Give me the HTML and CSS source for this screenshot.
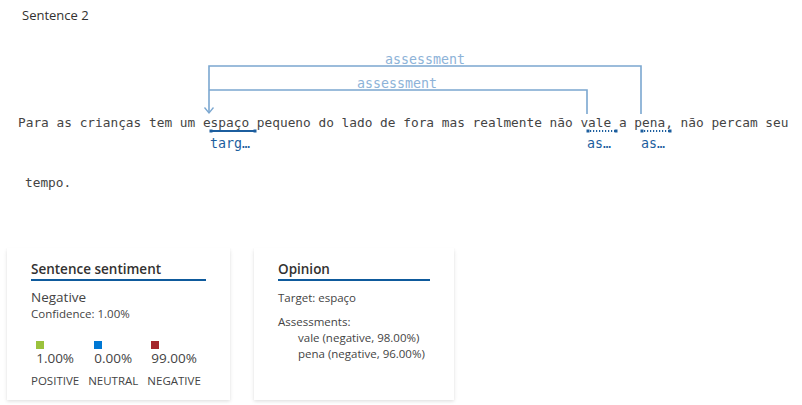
FILE: index.html
```
<!DOCTYPE html>
<html>
<head>
<meta charset="utf-8">
<link rel="stylesheet" href="styles.css">
</head>
<body>
<div class="title">Sentence 2</div>
<div class="viz">
  <svg class="arcs" width="802" height="130" viewBox="0 40 802 130" xmlns="http://www.w3.org/2000/svg">
    <g class="arc" fill="none" stroke="#7ba7d0" stroke-width="1.6">
      <polyline points="209,113 209,66 641,66 641,114"/>
      <polyline points="209,90 587,90 587,114"/>
      <polyline points="204.5,107.5 209,113 213.5,107.5" stroke-width="1.3"/>
    </g>
    <text class="arc-label" x="385" y="64">assessment</text>
    <text class="arc-label" x="357" y="88">assessment</text>
    <g fill="#1c5e9e" stroke="#1c5e9e">
      <line x1="211" y1="131" x2="255" y2="131" stroke-width="2"/>
      <rect x="209.5" y="129.5" width="3" height="3" stroke="none"/>
      <rect x="253.5" y="129.5" width="3" height="3" stroke="none"/>
      <line x1="590" y1="131" x2="615" y2="131" stroke-width="2" stroke-dasharray="1.2 1.8"/>
      <rect x="586.5" y="129.5" width="3" height="3" stroke="none"/>
      <rect x="614.5" y="129.5" width="3" height="3" stroke="none"/>
      <line x1="644" y1="131" x2="669" y2="131" stroke-width="2" stroke-dasharray="1.2 1.8"/>
      <rect x="640.5" y="129.5" width="3" height="3" stroke="none"/>
      <rect x="668.5" y="129.5" width="3" height="3" stroke="none"/>
    </g>
    <text class="tok-label" x="210" y="148">targ…</text>
    <text class="tok-label" x="587" y="148">as…</text>
    <text class="tok-label" x="641" y="148">as…</text>
  </svg>
  <div class="line first">Para as crianças tem um espaço pequeno do lado de fora mas realmente não vale a pena, não percam seu</div>
  <div class="line second">tempo.</div>
</div>
<div class="cards">
  <div class="card card-sent">
    <div class="card-title">Sentence sentiment</div>
    <div class="label-big">Negative</div>
    <div class="small">Confidence: 1.00%</div>
    <div class="scores">
      <div class="score">
        <div class="score-inner">
          <span class="sq pos"></span>
          <div class="pct">1.00%</div>
        </div>
        <div class="cap">POSITIVE</div>
      </div>
      <div class="score">
        <div class="score-inner">
          <span class="sq neu"></span>
          <div class="pct">0.00%</div>
        </div>
        <div class="cap">NEUTRAL</div>
      </div>
      <div class="score">
        <div class="score-inner">
          <span class="sq neg"></span>
          <div class="pct">99.00%</div>
        </div>
        <div class="cap">NEGATIVE</div>
      </div>
    </div>
  </div>
  <div class="card card-op">
    <div class="card-title">Opinion</div>
    <div class="small target">Target: espaço</div>
    <div class="small ass-head">Assessments:</div>
    <div class="small ass">vale (negative, 98.00%)</div>
    <div class="small ass">pena (negative, 96.00%)</div>
  </div>
</div>
</body>
</html>
```
FILE: styles.css
```
html, body {
  margin: 0;
  padding: 0;
  background: #ffffff;
}
body {
  width: 802px;
  height: 405px;
  overflow: hidden;
  font-family: "Open Sans", "Noto Sans", sans-serif;
  color: #444444;
}
.title {
  padding: 6px 0 0 22px;
  height: 40px;
  box-sizing: border-box;
  font-size: 13px;
  line-height: 18px;
  color: #323130;
}
.viz {
  position: relative;
  height: 170px;
  padding-top: 74px;
  box-sizing: border-box;
}
.arcs {
  position: absolute;
  left: 0;
  top: 0;
}
.arc-label {
  font-family: "DejaVu Sans Mono", monospace;
  font-size: 13.3px;
  fill: #8db3d8;
}
.tok-label {
  font-family: "DejaVu Sans Mono", monospace;
  font-size: 13.3px;
  fill: #1c5e9e;
}
.line {
  font-family: "DejaVu Sans Mono", monospace;
  font-size: 12.8px;
  line-height: 18px;
  white-space: nowrap;
  color: #444444;
}
.first {
  padding-left: 18px;
}
.second {
  padding-left: 25px;
  margin-top: 42px;
}
.cards {
  display: flex;
  gap: 24px;
  padding-left: 7px;
  margin-top: 38px;
}
.card {
  background: #fff;
  height: 152px;
  box-sizing: border-box;
  padding: 11px 24px 0 24px;
  box-shadow: 0 1.6px 3.6px rgba(0,0,0,0.13), 0 0.3px 0.9px rgba(0,0,0,0.11);
}
.card-sent { width: 223px; }
.card-op { width: 200px; }
.card-title {
  font-size: 13.5px;
  font-weight: 600;
  line-height: 20px;
  color: #323130;
  border-bottom: 2px solid #0e5a9c;
}
.label-big {
  font-size: 13.5px;
  line-height: 18px;
  margin-top: 7px;
}
.small {
  font-size: 11.5px;
  line-height: 16px;
}
.scores {
  display: flex;
  gap: 9px;
  margin-top: 19px;
}
.score {
  display: flex;
  flex-direction: column;
  align-items: center;
}
.sq {
  display: block;
  width: 8px;
  height: 8px;
}
.pos { background: #9bc23c; }
.neu { background: #0078d4; }
.neg { background: #a4262c; }
.pct {
  font-size: 13.5px;
  line-height: 18px;
}
.cap {
  font-size: 11.5px;
  line-height: 16px;
  margin-top: 6px;
}
.target { margin-top: 9px; }
.ass-head { margin-top: 8px; }
.ass { padding-left: 20px; }
```
